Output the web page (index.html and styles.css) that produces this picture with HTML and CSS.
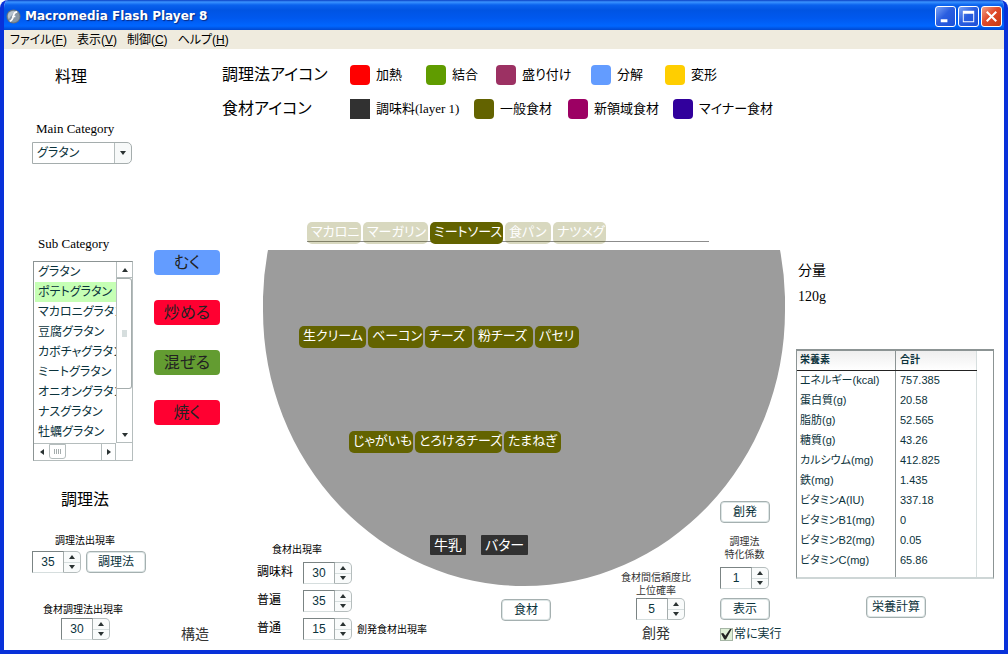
FILE: index.html
```html
<!DOCTYPE html>
<html lang="ja">
<head>
<meta charset="utf-8">
<meta name="viewport" content="width=device-width, initial-scale=1">
<title>Macromedia Flash Player 8</title>
<link rel="stylesheet" href="styles.css">
</head>
<body>
<svg class="defs" aria-hidden="true">
  <symbol id="up" viewBox="0 0 6 4"><path d="M3 0L6 4H0Z"/></symbol>
  <symbol id="down" viewBox="0 0 6 4"><path d="M0 0H6L3 4Z"/></symbol>
  <symbol id="left" viewBox="0 0 4 6"><path d="M4 0V6L0 3Z"/></symbol>
  <symbol id="right" viewBox="0 0 4 6"><path d="M0 0L4 3L0 6Z"/></symbol>
</svg>
<div class="window">
  <header class="titlebar">
    <svg class="app-icon" viewBox="0 0 16 16" aria-hidden="true">
      <circle cx="8" cy="8" r="7.5" fill="#65727f"/>
      <circle cx="8" cy="8" r="6.5" fill="#8796a5"/>
      <path d="M3 4Q8 0 12 4Q6 5 3 11Q1 7 3 4Z" fill="#b7c3ce"/>
      <path d="M12 3Q9 3 8 7Q7 12 4 13M6.500 8H10" fill="none" stroke="#fff" stroke-width="1.800"/>
    </svg>
    <h1 class="window-title">Macromedia Flash Player 8</h1>
    <div class="window-buttons">
      <button class="win-btn" aria-label="最小化"><svg viewBox="0 0 20 20"><path d="M5 13H12V16H5Z" fill="#fff"/></svg></button>
      <button class="win-btn" aria-label="最大化"><svg viewBox="0 0 20 20"><path d="M4 4H16V16H4ZM5 7V15H15V7Z" fill="#fff" fill-rule="evenodd"/></svg></button>
      <button class="win-btn win-btn--close" aria-label="閉じる"><svg viewBox="0 0 20 20"><path d="M5 5L15 15M15 5L5 15" stroke="#fff" stroke-width="2.200"/></svg></button>
    </div>
  </header>
  <nav class="menubar">
    <button class="menu">ファイル(<u>F</u>)</button>
    <button class="menu">表示(<u>V</u>)</button>
    <button class="menu">制御(<u>C</u>)</button>
    <button class="menu">ヘルプ(<u>H</u>)</button>
  </nav>

  <main class="stage">
    <section class="top">
      <h2 class="heading heading--dish">料理</h2>
      <div class="legend">
        <div class="legend-row legend-row--methods">
          <h2 class="heading">調理法アイコン</h2>
          <span class="key"><i class="swatch swatch--heat"></i>加熱</span>
          <span class="key"><i class="swatch swatch--join"></i>結合</span>
          <span class="key"><i class="swatch swatch--plate"></i>盛り付け</span>
          <span class="key"><i class="swatch swatch--split"></i>分解</span>
          <span class="key"><i class="swatch swatch--shape"></i>変形</span>
        </div>
        <div class="legend-row legend-row--foods">
          <h2 class="heading">食材アイコン</h2>
          <span class="key"><i class="swatch swatch--season"></i>調味料(layer 1)</span>
          <span class="key"><i class="swatch swatch--general"></i>一般食材</span>
          <span class="key"><i class="swatch swatch--new"></i>新領域食材</span>
          <span class="key"><i class="swatch swatch--minor"></i>マイナー食材</span>
        </div>
      </div>
    </section>

    <div class="body">
      <section class="side">
        <label class="caption" for="main-cat">Main Category</label>
        <div class="combo">
          <select id="main-cat" class="combo-select"><option>グラタン</option></select>
          <svg class="arrow combo-arrow" aria-hidden="true"><use href="#down"/></svg>
        </div>
        <div class="sub">
          <div class="sub-list">
            <label class="caption caption--sub" for="sub-cat">Sub Category</label>
            <div class="listbox">
              <select id="sub-cat" class="list" size="9">
                <option>グラタン</option>
                <option selected>ポテトグラタン</option>
                <option>マカロニグラタン</option>
                <option>豆腐グラタン</option>
                <option>カボチャグラタン</option>
                <option>ミートグラタン</option>
                <option>オニオングラタン</option>
                <option>ナスグラタン</option>
                <option>牡蠣グラタン</option>
              </select>
              <div class="vbar">
                <button class="bar-btn" aria-label="上へ"><svg class="arrow"><use href="#up"/></svg></button>
                <div class="vthumb"><i class="grip"></i></div>
                <button class="bar-btn bar-btn--last" aria-label="下へ"><svg class="arrow"><use href="#down"/></svg></button>
              </div>
              <div class="hbar">
                <button class="bar-btn" aria-label="左へ"><svg class="arrow arrow--side"><use href="#left"/></svg></button>
                <div class="hthumb"><i class="hgrip"></i></div>
                <button class="bar-btn bar-btn--last" aria-label="右へ"><svg class="arrow arrow--side"><use href="#right"/></svg></button>
              </div>
            </div>
          </div>
          <div class="steps">
            <button class="step step--split">むく</button>
            <button class="step step--heat">炒める</button>
            <button class="step step--join">混ぜる</button>
            <button class="step step--heat">焼く</button>
          </div>
        </div>
        <h2 class="heading heading--method">調理法</h2>
        <label class="small small--method" for="rate-method">調理法出現率</label>
        <div class="line">
          <div class="spin"><input id="rate-method" class="spin-input" value="35"><div class="spin-btns"><button class="spin-btn" aria-label="増やす"><svg class="arrow"><use href="#up"/></svg></button><button class="spin-btn" aria-label="減らす"><svg class="arrow"><use href="#down"/></svg></button></div></div>
          <button class="btn btn--wide">調理法</button>
        </div>
        <div class="foot">
          <div class="foot-field">
            <label class="small" for="rate-both">食材調理法出現率</label>
            <div class="spin"><input id="rate-both" class="spin-input" value="30"><div class="spin-btns"><button class="spin-btn" aria-label="増やす"><svg class="arrow"><use href="#up"/></svg></button><button class="spin-btn" aria-label="減らす"><svg class="arrow"><use href="#down"/></svg></button></div></div>
          </div>
          <h3 class="subheading">構造</h3>
        </div>
      </section>

      <section class="centre">
        <div class="dish">
          <div class="chips chips--tabs">
            <button class="chip chip--faded">マカロニ</button>
            <button class="chip chip--faded">マーガリン</button>
            <button class="chip">ミートソース</button>
            <button class="chip chip--faded">食パン</button>
            <button class="chip chip--faded">ナツメグ</button>
          </div>
          <div class="bowl">
            <svg class="bowl-shape" viewBox="0 0 522 336" preserveAspectRatio="none" aria-hidden="true"><path d="M5 0H517A261 275 0 0 1 522 61A261 275 0 0 1 0 61A261 275 0 0 1 5 0Z" fill="#9c9c9c"/></svg>
            <div class="bowl-rows">
              <div class="chips chips--mid">
                <button class="chip">生クリーム</button>
                <button class="chip">ベーコン</button>
                <button class="chip">チーズ</button>
                <button class="chip">粉チーズ</button>
                <button class="chip">パセリ</button>
              </div>
              <div class="chips chips--low">
                <button class="chip">じゃがいも</button>
                <button class="chip">とろけるチーズ</button>
                <button class="chip">たまねぎ</button>
              </div>
              <div class="tags">
                <button class="tag">牛乳</button>
                <button class="tag">バター</button>
              </div>
            </div>
          </div>
        </div>

        <div class="controls">
          <div class="rates">
            <h3 class="small small--rates">食材出現率</h3>
            <div class="rate"><label class="rate-label" for="r1">調味料</label><div class="spin"><input id="r1" class="spin-input" value="30"><div class="spin-btns"><button class="spin-btn" aria-label="増やす"><svg class="arrow"><use href="#up"/></svg></button><button class="spin-btn" aria-label="減らす"><svg class="arrow"><use href="#down"/></svg></button></div></div></div>
            <div class="rate"><label class="rate-label" for="r2">普遍</label><div class="spin"><input id="r2" class="spin-input" value="35"><div class="spin-btns"><button class="spin-btn" aria-label="増やす"><svg class="arrow"><use href="#up"/></svg></button><button class="spin-btn" aria-label="減らす"><svg class="arrow"><use href="#down"/></svg></button></div></div></div>
            <div class="rate"><label class="rate-label" for="r3">普通</label><div class="spin"><input id="r3" class="spin-input" value="15"><div class="spin-btns"><button class="spin-btn" aria-label="増やす"><svg class="arrow"><use href="#up"/></svg></button><button class="spin-btn" aria-label="減らす"><svg class="arrow"><use href="#down"/></svg></button></div></div><span class="small rate-note">創発食材出現率</span></div>
          </div>
          <div class="food"><button class="btn">食材</button></div>
          <div class="trust">
            <label class="small small--soft" for="trust">食材間信頼度比<br>上位確率</label>
            <div class="spin"><input id="trust" class="spin-input" value="5"><div class="spin-btns"><button class="spin-btn" aria-label="増やす"><svg class="arrow"><use href="#up"/></svg></button><button class="spin-btn" aria-label="減らす"><svg class="arrow"><use href="#down"/></svg></button></div></div>
            <h3 class="subheading">創発</h3>
          </div>
          <div class="emerge">
            <button class="btn">創発</button>
            <label class="small small--soft small--factor" for="factor">調理法<br>特化係数</label>
            <div class="spin"><input id="factor" class="spin-input" value="1"><div class="spin-btns"><button class="spin-btn" aria-label="増やす"><svg class="arrow"><use href="#up"/></svg></button><button class="spin-btn" aria-label="減らす"><svg class="arrow"><use href="#down"/></svg></button></div></div>
            <button class="btn btn--show">表示</button>
            <label class="check"><input type="checkbox" class="check-box" checked>常に実行</label>
          </div>
        </div>
      </section>

      <aside class="nutrition">
        <h3 class="amount-title">分量</h3>
        <p class="amount">120g</p>
        <div class="grid">
          <table class="table">
            <thead><tr><th>栄養素</th><th>合計</th></tr></thead>
            <tbody>
              <tr><td>エネルギー(kcal)</td><td>757.385</td></tr>
              <tr><td>蛋白質(g)</td><td>20.58</td></tr>
              <tr><td>脂肪(g)</td><td>52.565</td></tr>
              <tr><td>糖質(g)</td><td>43.26</td></tr>
              <tr><td>カルシウム(mg)</td><td>412.825</td></tr>
              <tr><td>鉄(mg)</td><td>1.435</td></tr>
              <tr><td>ビタミンA(IU)</td><td>337.18</td></tr>
              <tr><td>ビタミンB1(mg)</td><td>0</td></tr>
              <tr><td>ビタミンB2(mg)</td><td>0.05</td></tr>
              <tr><td>ビタミンC(mg)</td><td>65.86</td></tr>
            </tbody>
          </table>
        </div>
        <button class="btn btn--wide btn--calc">栄養計算</button>
      </aside>
    </div>
  </main>
</div>
</body>
</html>
```
FILE: styles.css
```css
* { box-sizing: border-box; }

body {
  margin: 0;
  font-family: "Liberation Sans", "Noto Sans CJK JP", sans-serif;
  font-size: 12px;
  line-height: 16px;
  color: #000;
  font-feature-settings: "palt";
}

h1, h2, h3, p { margin: 0; font-weight: 400; }

button, input, select {
  margin: 0;
  padding: 0;
  border: 0;
  font: inherit;
  font-feature-settings: inherit;
  color: inherit;
  background: none;
}

button { white-space: nowrap; }
.defs { display: none; }

/* Window frame */
.window {
  display: flex;
  flex-direction: column;
  min-height: 100vh;
  border: solid #0831d9;
  border-width: 0 4px 4px;
  border-radius: 8px 8px 0 0;
  background: #fff;
  overflow: hidden;
}

.titlebar {
  display: flex;
  align-items: center;
  gap: 4px;
  height: 30px;
  margin: 0 -4px;
  padding: 2px 6px 0 6px;
  background: linear-gradient(#0a3fc4 0, #3a93ff 2px, #0a62ee 5px, #0054e3 10px, #0058ee 18px, #0066ff 26px, #0048d0 30px);
  color: #fff;
}

.app-icon { width: 15px; height: 15px; }

.window-title {
  flex: 1;
  font-family: "DejaVu Sans", sans-serif;
  font-size: 12px;
  font-weight: 700;
  text-shadow: 1px 1px 1px #0a2a80;
}

.window-buttons { display: flex; gap: 2px; }

.win-btn {
  width: 21px;
  height: 21px;
  border: 1px solid #fff;
  border-radius: 3px;
  background: linear-gradient(135deg, #7aa2f5, #2a5ee0 45%, #1c4fd8);
}

.win-btn svg { display: block; width: 19px; height: 19px; }
.win-btn--close { background: linear-gradient(135deg, #f0a088, #e0492a 45%, #c83a10); }

.menubar {
  display: flex;
  gap: 10px;
  height: 19px;
  padding: 0 6px;
  background: #efebde;
}

.menu { line-height: 18px; }

/* Heading row with the icon legend */
.stage { flex: 1; display: flex; flex-direction: column; }

.top {
  display: flex;
  gap: 135px;
  padding: 14px 0 0 51px;
}

.heading { font-size: 16px; line-height: 24px; white-space: nowrap; }
.heading--dish { padding-top: 2px; }
.legend { flex: 1; display: grid; row-gap: 10px; }
.legend-row { display: grid; align-items: center; justify-content: start; }
.legend-row--methods { grid-template-columns: 128px 76px 70px 95px 74px auto; }
.legend-row--foods { grid-template-columns: 128px 124px 94px 105px auto; }

.key {
  display: flex;
  align-items: center;
  gap: 6px;
  font-family: "Liberation Serif", "Noto Sans CJK JP", serif;
  font-size: 13px;
  white-space: nowrap;
}

.swatch { width: 20px; height: 20px; border-radius: 4px; }
.swatch--heat { background: #f00; }
.swatch--join { background: #609c00; }
.swatch--plate { background: #9c3163; }
.swatch--split { background: #639cff; }
.swatch--shape { background: #ffce00; }
.swatch--season { background: #313131; border-radius: 0; }
.swatch--general { background: #636300; }
.swatch--new { background: #9c0063; }
.swatch--minor { background: #31009c; }

.body { flex: 1; display: flex; }

/* Left column */
.side { width: 240px; padding-left: 28px; }

.caption {
  display: block;
  padding-left: 4px;
  font-family: "Liberation Serif", "Noto Sans CJK JP", serif;
  font-size: 13px;
}

.caption--sub { padding-left: 6px; }

.combo { display: grid; width: 100px; height: 22px; margin-top: 5px; }
.combo > * { grid-area: 1 / 1; }

.combo-select {
  appearance: none;
  padding-left: 4px;
  border: 1px solid #a5adad;
  border-radius: 0 5px 5px 0;
  background: linear-gradient(90deg, transparent 81px, #b5bdbd 81px, #b5bdbd 82px, #f7f9f9 82px);
  color: #0b333c;
}

.arrow { display: block; width: 6px; height: 4px; margin: auto; fill: #2a3232; }
.arrow--side { width: 4px; height: 6px; }
.combo .combo-arrow { align-self: center; justify-self: end; margin: 0 6px 0 0; pointer-events: none; }

.sub { display: flex; gap: 21px; margin-top: 72px; }
.sub-list { width: 101px; }
.steps { display: grid; gap: 25px; align-content: start; padding-top: 14px; }

.step {
  width: 66px;
  height: 25px;
  border-radius: 4px;
  font-size: 16px;
  line-height: 22px;
  color: #222;
}

.step--split { background: #639cff; }
.step--heat { background: #ff0031; }
.step--join { background: #639c31; }

.listbox {
  display: grid;
  grid-template-columns: minmax(0, 1fr) 16px;
  grid-template-rows: 181px 17px;
  margin: 9px 0 0 1px;
  border: 1px solid #8c9494;
  border-right-color: #b5bdbd;
  border-bottom-color: #b5bdbd;
}

.list {
  height: 181px;
  padding-left: 1px;
  overflow: hidden;
  outline: 0;
  color: #0b333c;
}

.list option { height: 20px; min-height: 20px; padding: 0 0 0 3px; line-height: 20px; overflow: hidden; text-overflow: clip; }
.list option:checked { background: #c6ffb5 linear-gradient(#c6ffb5, #c6ffb5); color: #0b333c; }

.vbar { display: flex; flex-direction: column; border-left: 1px solid #b5bdbd; }
.bar-btn { width: 15px; height: 16px; border-bottom: 1px solid #b5bdbd; }
.vthumb { display: grid; place-items: center; height: 111px; border: 1px solid #a5adad; border-left: 0; border-radius: 0 3px 3px 0; }
.vbar .bar-btn--last { margin-top: auto; }
.grip { width: 5px; height: 7px; background: #d6dede; }

.hbar { display: flex; border-top: 1px solid #b5bdbd; }
.hthumb { display: grid; place-items: center; width: 17px; height: 15px; border: 1px solid #b5bdbd; border-radius: 0 0 3px 3px; }
.hgrip { width: 8px; height: 5px; background: repeating-linear-gradient(90deg, #a5adad 0 1px, transparent 1px 2px); }
.hbar .bar-btn { border: 0; }
.hbar .bar-btn--last { margin-left: auto; border-left: 1px solid #b5bdbd; border-right: 1px solid #b5bdbd; }

.heading--method { margin: 27px 0 0 29px; }

.small { display: block; font-size: 10px; line-height: 13px; white-space: nowrap; }
.small--soft { color: #333; text-align: center; }
.small--method { margin: 22px 0 0 23px; }

.line { display: flex; gap: 5px; margin-top: 4px; }
.foot { display: flex; align-items: flex-start; gap: 59px; margin: 30px 0 0 11px; }
.foot-field { display: grid; gap: 2px; width: 79px; }
.foot .spin { margin-left: 18px; }
.foot .subheading { padding-top: 22px; }
.subheading { font-size: 14px; line-height: 18px; color: #333; white-space: nowrap; }

/* Numeric stepper and push button */
.spin { display: flex; width: 49px; height: 22px; }

.spin-input {
  flex: 1;
  min-width: 0;
  border: 1px solid #7b8484;
  border-right-color: #a5adad;
  border-bottom-color: #d6dede;
  background: #fff;
  text-align: center;
  color: #0b333c;
}

.spin-btns {
  display: grid;
  width: 17px;
  border: 1px solid #b5bdbd;
  border-left: 0;
  border-radius: 0 5px 5px 0;
  background: #f9fbfb;
}

.spin-btn + .spin-btn { border-top: 1px solid #d6dede; }

.btn {
  width: 50px;
  height: 22px;
  border: 1px solid #a5b0b0;
  border-radius: 4px;
  background: #fff;
  box-shadow: inset 0 0 0 1px #dde6e6;
  line-height: 18px;
  color: #0b333c;
}

.btn--wide { width: 60px; }

/* Dish area and the controls laid around it */
.centre { flex: 1; display: grid; min-width: 0; }
.centre > * { grid-area: 1 / 1; }
.dish { padding: 101px 10px 0 19px; }

.chips { display: grid; column-gap: 2px; }

.chips--tabs {
  grid-template-columns: 54px 65px 73px 46px 53px;
  width: 402px;
  margin-left: 44px;
  background: linear-gradient(#8c8c8c, #8c8c8c) 0 19px / 100% 1px no-repeat;
}

.chip {
  height: 22px;
  padding: 0 0 2px 4px;
  border-radius: 5px;
  background: #636300;
  font-size: 13px;
  line-height: 18px;
  text-align: left;
  color: #fff;
}

.chip--faded { background: rgb(99 99 0 / 25%); }

.bowl { display: grid; margin-top: 6px; }
.bowl > * { grid-area: 1 / 1; }
.bowl-shape { display: block; width: 100%; height: 336px; }
.bowl-rows { display: grid; align-content: start; z-index: 1; }
.chips--mid { grid-template-columns: 67px 55px 47px 59px 44px; margin: 76px 0 0 36px; }
.chips--low { grid-template-columns: 64px 87px 57px; margin: 83px 0 0 86px; }
.tags { display: flex; gap: 15px; margin: 82px 0 0 167px; }

.tag {
  height: 20px;
  padding: 0 4px;
  border-radius: 1px;
  background: #313131;
  font-size: 14px;
  line-height: 20px;
  color: #fff;
}

.controls {
  z-index: 1;
  align-self: end;
  display: grid;
  grid-template-columns: 244fr 120fr 99fr 62fr;
  align-items: end;
  padding: 0 13px 8px;
  pointer-events: none;
}

.controls > * { pointer-events: auto; }
.rates { display: grid; justify-content: start; gap: 6px; padding-bottom: 2px; }
.small--rates { padding-left: 15px; }
.rate { display: flex; align-items: center; }
.rate-label { width: 46px; padding-bottom: 2px; }
.rate-note { padding-left: 5px; }
.food { padding-bottom: 21px; }
.trust { display: grid; justify-items: center; justify-content: start; }
.trust .spin { margin: 1px 0 4px 8px; }
.emerge { display: grid; justify-items: start; white-space: nowrap; }
.small--factor { width: 49px; margin: 12px 0 6px; }
.btn--show { margin: 9px 0 6px; }
.check { display: flex; align-items: center; gap: 1px; color: #0b333c; }

.check-box {
  appearance: none;
  display: grid;
  place-items: center;
  width: 13px;
  height: 13px;
  border: 1px solid #a5b5a5;
  background: #deefd6;
}

.check-box:checked::after {
  content: "";
  width: 11px;
  height: 11px;
  background: #222;
  clip-path: polygon(0 45%, 20% 40%, 40% 65%, 85% 0, 100% 0, 45% 100%, 30% 100%);
}

/* Nutrition column */
.nutrition { width: 209px; padding: 140px 10px 0 1px; }
.amount-title { padding-left: 2px; font-size: 14px; line-height: 18px; }
.amount { padding: 9px 0 0 2px; font-family: "Liberation Serif", serif; font-size: 14px; line-height: 18px; }

.grid {
  margin-top: 43px;
  height: 230px;
  padding-right: 16px;
  border: 1px solid #8c9494;
  border-top-width: 2px;
  border-bottom: 2px solid #ced6d6;
}

.table {
  width: 100%;
  height: 100%;
  border-collapse: collapse;
  table-layout: fixed;
  border-right: 1px solid #d6dede;
  background: linear-gradient(90deg, transparent 98px, #8c9494 98px, #8c9494 99px, transparent 99px);
  font-size: 10px;
  color: #0b333c;
}

.table th, .table td { height: 20px; padding: 0 3px; text-align: left; line-height: 18px; white-space: nowrap; }
.table th:first-child { width: 100px; }
.table th { height: 19px; border-bottom: 1px solid #222; background: linear-gradient(#eee, #fff); }
.table th:first-child { background: linear-gradient(90deg, transparent 98px, #8c9494 98px 99px, transparent 99px), linear-gradient(#eee, #fff); }
.table td { font-size: 11px; vertical-align: middle; }
.table tbody tr:last-child td { height: 27px; padding-bottom: 7px; }
.btn--calc { display: block; margin: 17px 0 0 70px; }
```
